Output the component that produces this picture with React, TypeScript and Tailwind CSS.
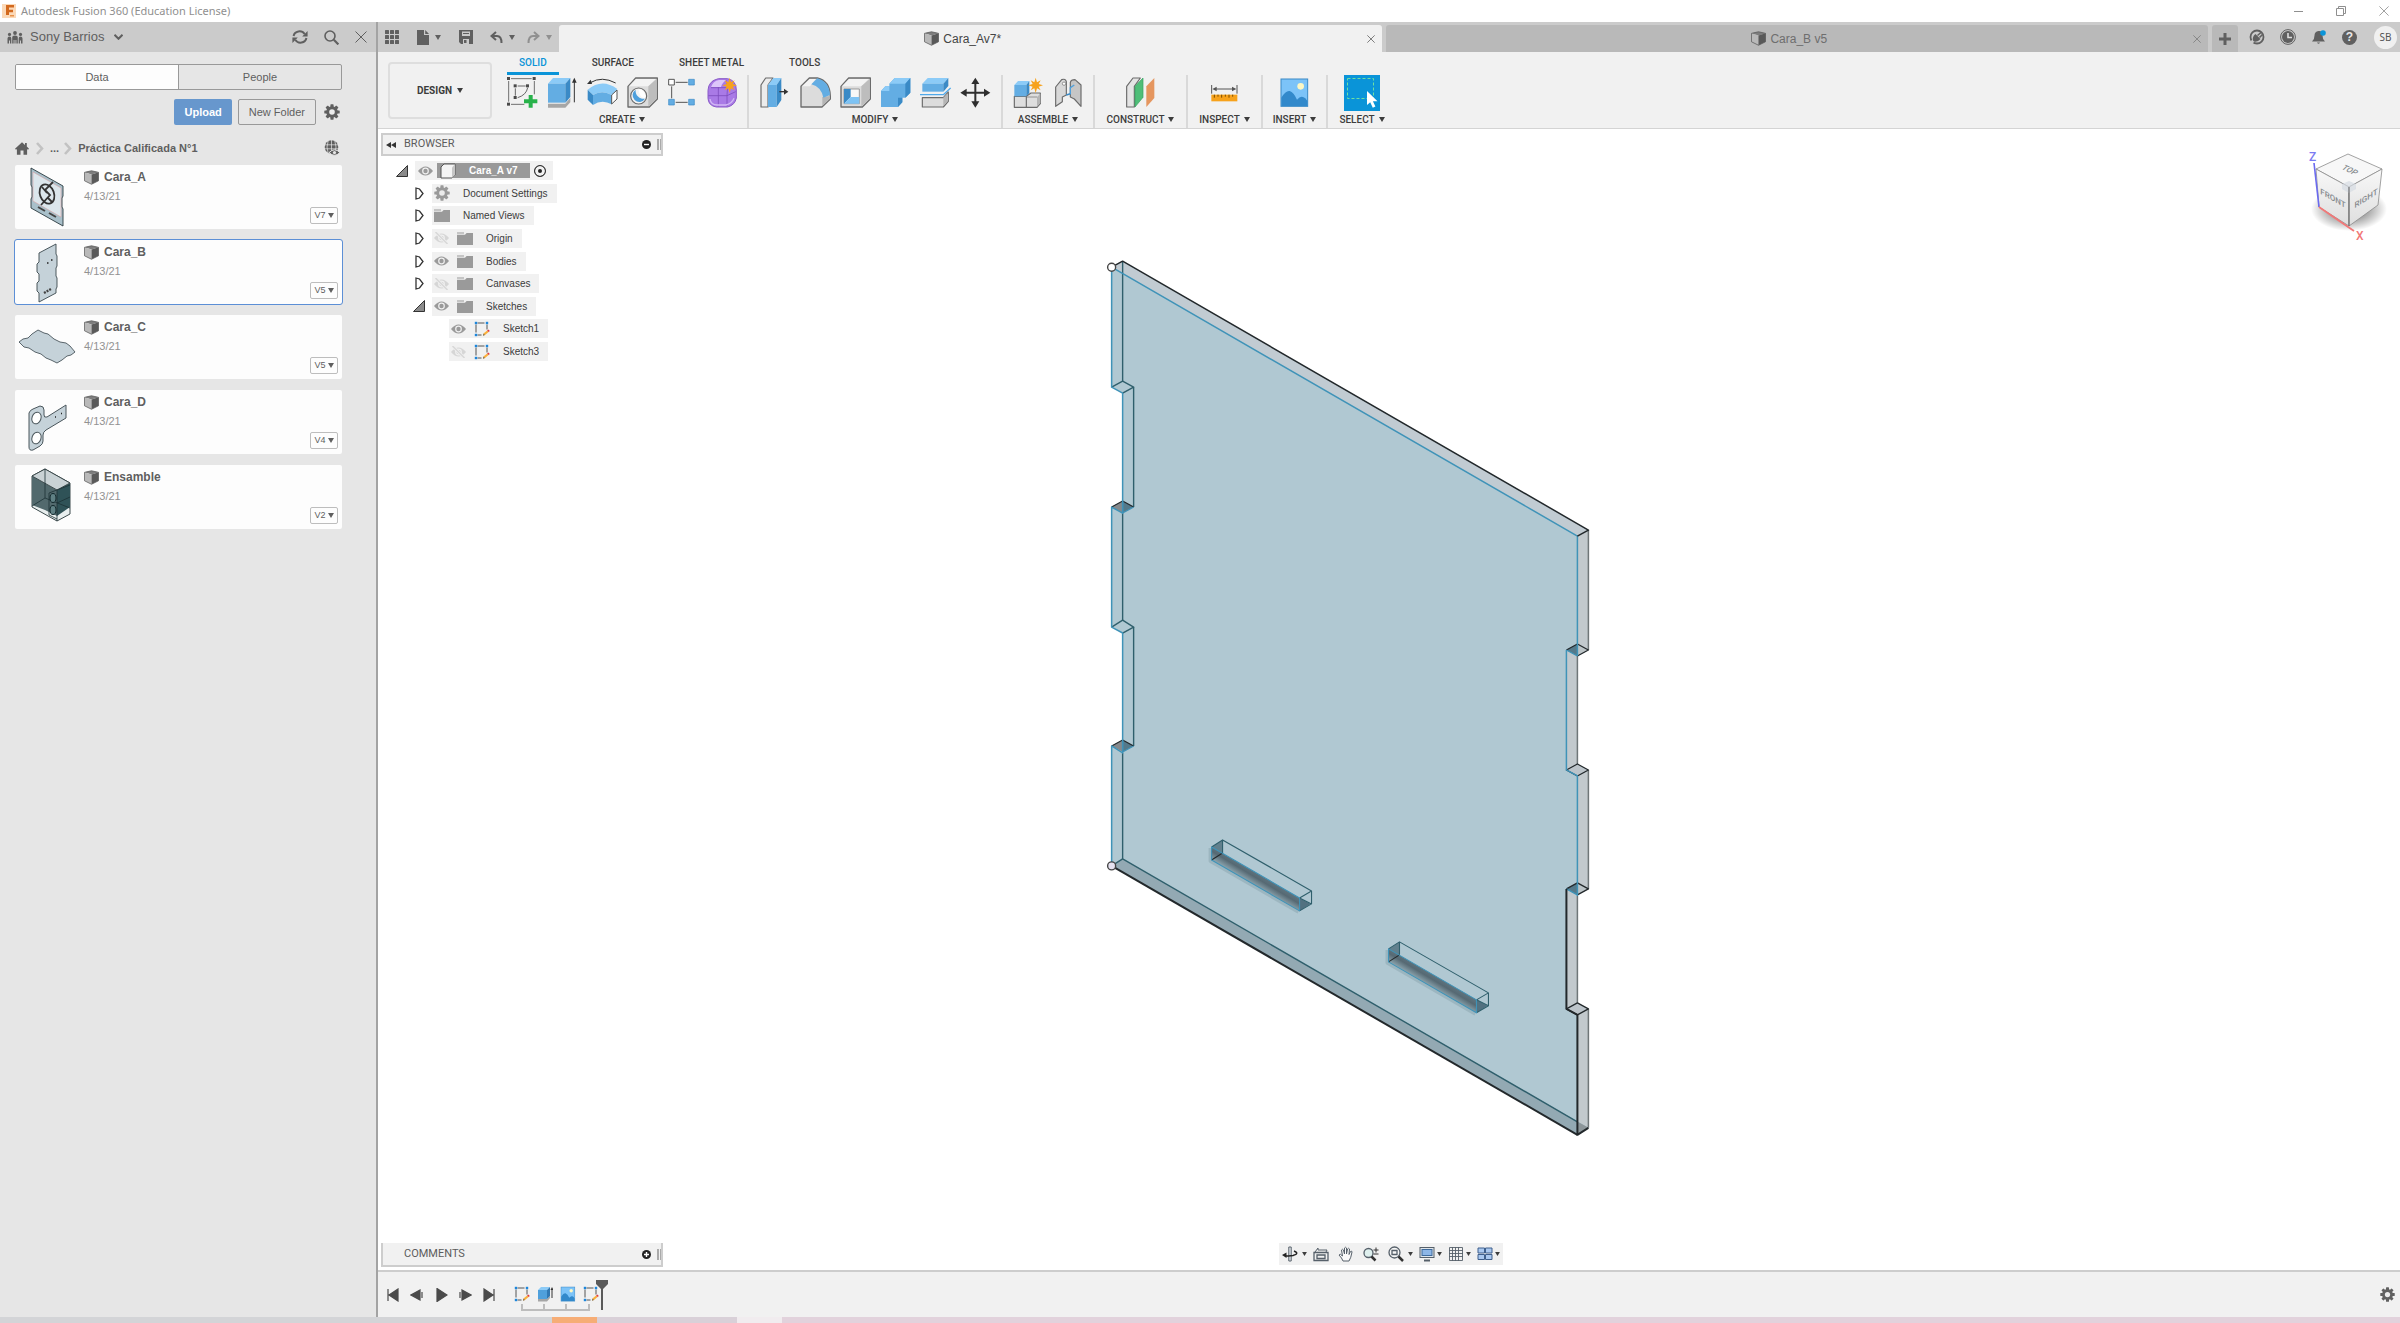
import type { ReactNode } from "react";

type SvgProps = { className?: string };

const OUT = "#6b6b6b";

/* ---------- small glyphs ---------- */

const Caret = ({ className = "w-[6px] h-[5px]" }: SvgProps) => (
  <svg viewBox="0 0 6 5" className={className} aria-hidden="true">
    <path d="M0 0h6L3 5z" fill="currentColor" />
  </svg>
);

const Cross = ({ className = "size-3" }: SvgProps) => (
  <svg viewBox="0 0 12 12" className={className} stroke="currentColor" aria-hidden="true">
    <path d="M0.5 0.5l11 11M11.5 0.5l-11 11" />
  </svg>
);

const Gear = ({ className = "size-4" }: SvgProps) => (
  <svg viewBox="0 0 16 16" className={className} aria-hidden="true">
    <g fill="currentColor">
      {[0, 45, 90, 135].map((a) => (
        <rect key={a} x="6.4" y="0.3" width="3.2" height="15.4" rx="0.6" transform={`rotate(${a} 8 8)`} />
      ))}
      <circle cx="8" cy="8" r="5.8" />
    </g>
    <circle cx="8" cy="8" r="2.8" fill="#ebebeb" />
  </svg>
);

const PartCube = ({ className = "size-4" }: SvgProps) => (
  <svg viewBox="0 0 16 16" className={className} aria-hidden="true">
    <path d="M0.5 2.5L8 0.8l7.5 1.7-7.5 2.3z" fill="#7d7d7d" />
    <path d="M0.5 2.5L8 4.8v10.4L0.5 11.5z" fill="#b9b9b9" />
    <path d="M15.5 2.5L8 4.8v10.4l7.5-3.7z" fill="#595959" />
    <path d="M0.5 2.5L8 0.8l7.5 1.7v9L8 15.2 0.5 11.5z" fill="none" stroke="#595959" strokeWidth="0.8" />
  </svg>
);

const People = () => (
  <svg viewBox="0 0 16 13" className="w-4 h-[13px]" fill="currentColor" aria-hidden="true">
    <circle cx="8" cy="2" r="1.9" />
    <circle cx="2.5" cy="3.4" r="1.6" />
    <circle cx="13.5" cy="3.4" r="1.6" />
    <path d="M5.2 12.5V6.8Q5.2 4.6 8 4.6t2.8 2.2v5.7H9.4V9H8.5v3.5h-1V9h-.9v3.5zM0.5 12.5V7.6Q.5 5.6 2.5 5.6q1.8 0 1.8 2v4.9H3V9.5H2v3zM15.5 12.5V7.6q0-2-2-2-1.8 0-1.8 2v4.9H13V9.5h1v3z" />
  </svg>
);

const Refresh = () => (
  <svg viewBox="0 0 16 14" className="w-4 h-[14px]" fill="none" stroke="currentColor" strokeWidth="2" aria-hidden="true">
    <path d="M1.6 6A6 5.6 0 0 1 12.6 4M14.4 8A6 5.6 0 0 1 3.4 10" />
    <path d="M15.6 1v5.4h-5.4zM0.4 13V7.6h5.4z" fill="currentColor" stroke="none" />
  </svg>
);

const Search = () => (
  <svg viewBox="0 0 15 15" className="size-[15px]" fill="none" stroke="currentColor" aria-hidden="true">
    <circle cx="6" cy="6" r="5" strokeWidth="1.6" />
    <path d="M9.8 9.8l4.6 4.6" strokeWidth="2.2" />
  </svg>
);

const Home = () => (
  <svg viewBox="0 0 14 13" className="w-[14px] h-[13px]" fill="currentColor" aria-hidden="true">
    <path d="M7 0.3l3 2.7V1h1.8v3.6L14 6.8l-1 1-.9-.8v5.7H8.5V8.6h-3v4.1H1.9V7L1 7.8l-1-1z" />
  </svg>
);

const Crumb = () => (
  <svg viewBox="0 0 8 13" className="w-2 h-[13px]" fill="none" stroke="#c2c2c2" strokeWidth="2.6" aria-hidden="true">
    <path d="M1 1l5 5.5-5 5.5" />
  </svg>
);

const GlobeEye = () => (
  <svg viewBox="0 0 16 16" className="size-4" aria-hidden="true">
    <circle cx="7.5" cy="7" r="6.8" fill="#5f5f5f" />
    <path d="M0.5 4.8h14M0.5 8.8h14M7.5 0v14M4.2 0.8Q1.8 7 4.2 13.4M10.8 0.8Q13.2 7 10.8 13.4" fill="none" stroke="#e6e6e6" strokeWidth="0.7" />
    <path d="M5 12.6Q10.5 7 16 12.6 10.5 18 5 12.6z" fill="#5f5f5f" stroke="#e6e6e6" />
    <circle cx="10.5" cy="12.6" r="1.6" fill="#e6e6e6" />
  </svg>
);

const Eye = ({ off = false }: { off?: boolean }) => (
  <svg viewBox="0 0 15 12" className="w-[15px] h-3" aria-hidden="true">
    <path d="M0 6Q7.5 -3 15 6 7.5 15 0 6z" fill={off ? "#d6d6d6" : "#9a9a9a"} />
    <circle cx="7.5" cy="6" r="3.4" fill="#f0f0f0" />
    <circle cx="7.5" cy="6" r="2.2" fill={off ? "#d6d6d6" : "#9a9a9a"} />
    {off && <path d="M1.5 0L13.5 12" stroke="#f0f0f0" strokeWidth="3" />}
    {off && <path d="M1.5 0L13.5 12" stroke="#d6d6d6" strokeWidth="1.4" />}
  </svg>
);

const Folder = () => (
  <svg viewBox="0 0 16 13" className="w-4 h-[13px]" fill="#9a9a9a" aria-hidden="true">
    <path d="M0 0.4h7v1.2H0zM0 2.8h8L9.6 1H16v12H0z" />
  </svg>
);

const SketchSmall = () => (
  <svg viewBox="0 0 16 16" className="size-4" aria-hidden="true">
    <path d="M3.5 2h7M2 3.5v8M13 3.5v5M3.5 14h4" stroke="#555" fill="none" />
    <g fill="#1c86dc">
      <rect x="0.8" y="0.8" width="2.4" height="2.4" />
      <rect x="11.8" y="0.8" width="2.4" height="2.4" />
      <rect x="0.8" y="12.8" width="2.4" height="2.4" />
    </g>
    <path d="M9 14.8l.5-2.4 3.6-3 1.5 1.7-3.6 3z" fill="#fbb03b" />
    <path d="M13.1 9.4l1.2-1 1.5 1.7-1.2 1z" fill="#e2383f" />
    <path d="M9 14.8l.5-2.4 1.4 1.7z" fill="#666" />
  </svg>
);

/* ---------- ribbon icons (93-unit grid drawn at 31px) ---------- */

const Ico = ({ children }: { children: ReactNode }) => (
  <svg viewBox="0 0 93 93" className="size-[31px]" fill="none" strokeLinejoin="round" aria-hidden="true">
    {children}
  </svg>
);

const Star = ({ x, y }: { x: number; y: number }) => (
  <g transform={`translate(${x} ${y})`} fill="#f7a21b">
    <path d="M0-23L4-9 15-15 9-4 22 0 9 4 15 15 4 9 0 23-4 9-15 15-9 4-22 0-9-4-15-15-4-9z" />
  </g>
);

const CreateSketch = () => (
  <Ico>
    <path d="M12 5h62M5 12v62M82 12v40M12 82h40" stroke="#5c5c5c" strokeWidth="2.6" />
    <path d="M32 27h24M25 34v22M62 32Q58 54 32 62" stroke="#5c5c5c" strokeWidth="2.8" />
    <g fill="#4a4a4a">
      <rect width="9" height="9" /><rect x="77" width="9" height="9" /><rect y="77" width="9" height="9" />
      <rect x="20" y="22" width="9" height="9" /><rect x="57" y="22" width="9" height="9" /><rect x="20" y="57" width="9" height="9" />
    </g>
    <path d="M65 54h12v13h14v12H77v13H65V79H51V67h14z" fill="#27b24a" />
  </Ico>
);

const Extrude = () => (
  <Ico>
    <path d="M3 80h52l15-18v14L55 92H3z" fill="#a6a6a6" />
    <path d="M3 20L18 3h52L55 20z" fill="#8ccbf7" />
    <path d="M3 20h52v57H3z" fill="#63ade3" />
    <path d="M55 20L70 3v57L55 77z" fill="#3a8ac6" />
    <path d="M82 76V12" stroke="#333" strokeWidth="3" />
    <path d="M75 17l7-15 7 15z" fill="#333" />
  </Ico>
);

const Revolve = () => (
  <Ico>
    <path d="M10 17Q45-4 86 18" stroke="#333" strokeWidth="3" />
    <path d="M0 21L11 8l4 13z" fill="#333" />
    <path d="M2 38Q45 2 91 36L74 54Q45 38 18 54z" fill="#8ccbf7" />
    <path d="M18 54Q45 38 74 54v28Q45 66 18 84z" fill="#63ade3" />
    <path d="M2 38l16 16v30L2 68z" fill="#3a8ac6" />
    <path d="M74 54l16-15v27L74 81z" fill="#fff" stroke="#555" strokeWidth="3" />
  </Ico>
);

const GreyBox = ({ w = 64 }: { w?: number }) => (
  <>
    <path d={`M3 28L26 3H${w + 27}V66L${w + 3} 90H3z`} fill="#dcdcdc" stroke={OUT} strokeWidth="4" />
    <path d={`M6 28L27 6H${w + 22}L${w} 28z`} fill="#f3f3f3" />
    <path d={`M${w} 28L${w + 25} 6V65L${w} 88z`} fill="#bdbdbd" />
  </>
);

const Hole = () => (
  <Ico>
    <GreyBox />
    <circle cx="35" cy="57" r="24" fill="#f4f4f4" stroke={OUT} strokeWidth="3.5" />
    <path d="M26 38A20 20 0 1 0 54 65 24 24 0 0 1 26 38z" fill="#4fa0dc" />
    <path d="M35 37a20 20 0 0 1 19 27Q36 62 35 37z" fill="#fff" />
  </Ico>
);

const Pattern = () => (
  <Ico>
    <path d="M26 16h36M26 76h36M14 28v36" stroke="#555" strokeWidth="3" />
    <rect x="5" y="7" width="17" height="17" fill="#fff" stroke="#555" strokeWidth="3" />
    <g fill="#63ade3" stroke="#3a8ac6" strokeWidth="2">
      <rect x="65" y="7" width="17" height="17" /><rect x="65" y="67" width="17" height="17" /><rect x="5" y="67" width="17" height="17" />
    </g>
  </Ico>
);

const Form = () => (
  <Ico>
    <path d="M3 40Q4 12 34 5h28q26 6 26 34v24Q84 84 62 90H28Q4 86 3 64z" fill="#a97ae6" stroke="#8a5bc8" strokeWidth="3" />
    <path d="M12 30Q18 12 36 9h22Q46 16 42 30z" fill="#dcc6fa" />
    <path d="M4 56h56l26-12M34 30v58M60 56q4-28-2-46M60 56v32M12 32h48" stroke="#7c4cbc" strokeWidth="2.4" />
    <path d="M9 66q2 18 22 18h26q18-4 24-20" stroke="#d2b8f5" strokeWidth="4" />
    <Star x={68} y={25} />
  </Ico>
);

const PressPull = () => (
  <Ico>
    <path d="M3 24L17 3h22L24 24v66H3z" fill="#ececec" stroke={OUT} strokeWidth="3.5" />
    <path d="M24 24L40 3h24L50 24z" fill="#8ccbf7" />
    <path d="M24 24h26v66H24z" fill="#63ade3" />
    <path d="M50 24L64 3v66L50 90z" fill="#3a8ac6" />
    <path d="M58 44h18" stroke="#333" strokeWidth="4" />
    <path d="M72 35l13 9-13 9z" fill="#333" />
  </Ico>
);

const Fillet = () => (
  <Ico>
    <path d="M3 28L28 3h24Q90 12 91 58v8L66 90H3z" fill="#dcdcdc" stroke={OUT} strokeWidth="4" />
    <path d="M67 60l22-3v9L67 87z" fill="#b5b5b5" />
    <path d="M6 28L29 6h18L30 28z" fill="#f3f3f3" />
    <path d="M34 22L52 4Q88 14 90 54L70 62Q64 30 34 22z" fill="#63ade3" />
  </Ico>
);

const Shell = () => (
  <Ico>
    <GreyBox />
    <rect x="12" y="36" width="46" height="44" fill="#f8f8f8" stroke="#777" strokeWidth="2" />
    <path d="M12 36h20v24L12 80z" fill="#3a8ac6" />
    <path d="M12 80l20-20h26v20z" fill="#7ec3f4" />
  </Ico>
);

const Combine = () => (
  <Ico>
    <path d="M3 42l13-14h12V20L44 3h47v44L76 62h-9v14L54 90H3z" fill="#63ade3" />
    <path d="M3 42l13-14h12v14zM28 20L44 3h47L76 20z" fill="#8ccbf7" />
    <path d="M76 20L91 3v44L76 62zM54 62h13v14L54 90z" fill="#3a8ac6" />
  </Ico>
);

const Split = () => (
  <Ico>
    <path d="M7 20L23 3h62L70 20z" fill="#8ccbf7" />
    <path d="M7 20h63v24H7z" fill="#63ade3" />
    <path d="M70 20L85 3v24L70 44z" fill="#3a8ac6" />
    <path d="M0 53h70l22-20" stroke="#4fa9ea" strokeWidth="4" />
    <path d="M7 62h63l15-17v28L70 90H7z" fill="#dcdcdc" stroke={OUT} strokeWidth="3.5" />
    <path d="M70 62l13-14v24L70 87z" fill="#b5b5b5" />
  </Ico>
);

const Move = () => (
  <Ico>
    <path d="M46 10v74M9 47h74" stroke="#2e2e2e" strokeWidth="6" />
    <path d="M46 2l12 19H34zM46 92l12-19H34zM1 47l19-12v24zM91 47L72 35v24z" fill="#2e2e2e" />
  </Ico>
);

const NewComponent = () => (
  <Ico>
    <path d="M4 58h36v33H4zM40 58l14-10h28v32L72 91H40z" fill="#dedede" stroke={OUT} strokeWidth="3.5" />
    <path d="M72 60l10-10v28L72 89z" fill="#b5b5b5" />
    <path d="M40 60h32" stroke={OUT} strokeWidth="2" />
    <path d="M4 24L15 12h34L40 24z" fill="#8ccbf7" />
    <path d="M4 24h36v34H4z" fill="#63ade3" />
    <path d="M40 24l9-12v36l-9 10z" fill="#3a8ac6" />
    <Star x={68} y={25} />
  </Ico>
);

const Joint = () => (
  <Ico>
    <path d="M8 88V30L26 8q12-4 14 6v40L28 60V74z" fill="#d8d8d8" stroke={OUT} strokeWidth="3.5" />
    <circle cx="33" cy="20" r="5" fill="#fff" stroke={OUT} strokeWidth="2" />
    <path d="M84 88V24L66 8q-12 0-14 8v44l12 6z" fill="#c6c6c6" stroke={OUT} strokeWidth="3.5" />
    <path d="M40 54l12-4" stroke="#3a8ac6" strokeWidth="5" />
    <path d="M52 52V32l12-8" stroke="#4fa0dc" strokeWidth="4" />
  </Ico>
);

const Plane = () => (
  <Ico>
    <path d="M5 28L24 3h22L28 28v62H5z" fill="#e4e4e4" stroke={OUT} strokeWidth="3.5" />
    <path d="M30 28L54 3v58L30 90z" fill="#4fbe78" stroke="#35a05e" strokeWidth="2" />
    <path d="M64 28L88 3v60L64 90z" fill="#e5965f" />
  </Ico>
);

const Measure = () => (
  <Ico>
    <path d="M8 24v26M84 24v26M16 36h60" stroke="#555" strokeWidth="3" />
    <path d="M10 36l13-7v14zM82 36l-13-7v14z" fill="#555" />
    <rect x="7" y="53" width="78" height="20" fill="#f7a21b" />
    <path d="M16 53v9M27 53v6M38 53v9M49 53v6M60 53v9M71 53v6" stroke="#7a4c00" strokeWidth="3" />
  </Ico>
);

const Picture = ({ className = "size-[31px]" }: SvgProps) => (
  <svg viewBox="0 0 93 93" className={className} aria-hidden="true">
    <rect x="6" y="6" width="80" height="82" fill="#7cc3f8" stroke="#3a8ac6" strokeWidth="3" />
    <circle cx="65" cy="28" r="10" fill="#fdf7c3" />
    <path d="M7 62Q20 40 32 42q12 4 22 26 10-12 18-8 8 2 13 12v15H7z" fill="#3289cb" />
  </svg>
);

const SelectTool = () => (
  <svg viewBox="0 0 36 36" className="size-9 bg-[#0a94d8]" fill="none" aria-hidden="true">
    <rect x="3.5" y="3.5" width="26" height="20" stroke="#6fe0a0" strokeDasharray="3 2" />
    <path d="M23 16v14l3.200-2.800 2.600 5.600 2.600-1.200-2.500-5.400H33.500z" fill="#fff" />
  </svg>
);

type Tool = { name: string; icon: ReactNode };
type Group = { label: string; width: string; tools: Tool[] };

const GROUPS: Group[] = [
  {
    label: "CREATE", width: "w-[252px]",
    tools: [
      { name: "Create Sketch", icon: <CreateSketch /> }, { name: "Extrude", icon: <Extrude /> },
      { name: "Revolve", icon: <Revolve /> }, { name: "Hole", icon: <Hole /> },
      { name: "Pattern", icon: <Pattern /> }, { name: "Create Form", icon: <Form /> },
    ],
  },
  {
    label: "MODIFY", width: "w-[254px]",
    tools: [
      { name: "Press Pull", icon: <PressPull /> }, { name: "Fillet", icon: <Fillet /> },
      { name: "Shell", icon: <Shell /> }, { name: "Combine", icon: <Combine /> },
      { name: "Split Body", icon: <Split /> }, { name: "Move", icon: <Move /> },
    ],
  },
  { label: "ASSEMBLE", width: "w-[92px]", tools: [{ name: "New Component", icon: <NewComponent /> }, { name: "Joint", icon: <Joint /> }] },
  { label: "CONSTRUCT", width: "w-[93px]", tools: [{ name: "Offset Plane", icon: <Plane /> }] },
  { label: "INSPECT", width: "w-[75px]", tools: [{ name: "Measure", icon: <Measure /> }] },
  { label: "INSERT", width: "w-[65px]", tools: [{ name: "Insert Canvas", icon: <Picture /> }] },
  { label: "SELECT", width: "w-[68px]", tools: [{ name: "Select", icon: <SelectTool /> }] },
];

/* ---------- data panel ---------- */

const PLATE = "#c5d2d9";

const Thumbs: Record<string, ReactNode> = {
  Cara_A: (
    <>
      <path d="M16 3l32 18v10l-1 2v9l1 2v17L16 43V34l1-2V22l-1-2z" fill="#a9c0ca" stroke="#2b3a40" strokeWidth="0.9" />
      <path d="M18 7l28 16v29L18 36z" fill="#dbe6ec" stroke="#d99" strokeWidth="0.5" />
      <g fill="none" stroke="#333" strokeWidth="1.8">
        <ellipse cx="32" cy="29" rx="7" ry="10" transform="rotate(-20 32 29)" />
        <path d="M38 17l-8 8 5 5-9 10M27 22l5 6M33 33l4 4" />
      </g>
      <path d="M23 42l7 4M34 48l7 4" stroke="#444" strokeWidth="2" />
    </>
  ),
  Cara_B: (
    <>
      <path d="M24 13L41 4V14L42 16V26L41 28V36L42 38V47L41 49V53L24 62V53L22 51V43L24 41V34L22 32V24L24 22Z" fill={PLATE} stroke="#3a474d" strokeWidth="0.9" />
      <path d="M32 23h1.500M36 20h1.500" stroke="#222" strokeWidth="1.6" />
      <path d="M29 53l7-4" stroke="#444" strokeWidth="2.400" strokeDasharray="2 1" />
    </>
  ),
  Cara_C: (
    <path
      d="M4 27L8 24 13 23 17 19 23 15 29 18 33 19 39 24 45 27 51 28 55 31 60 37 56 40 52 41 47 45 42 48 36 45 31 43 26 39 20 37 14 33 9 32Z"
      fill={PLATE} stroke="#4a565c" strokeWidth="0.9"
    />
  ),
  Cara_D: (
    <>
      <path d="M14 23q1-3 4-4l7-3q4 0 4 4v5q0 3 3 2l19-12v13L31 40q-3 2-3 5v6q0 3-3 5l-7 4q-4 1-4-3z" fill={PLATE} stroke="#4a565c" />
      <ellipse cx="21.500" cy="28" rx="4.500" ry="6" fill="#fff" stroke="#4a565c" transform="rotate(20 21.500 28)" />
      <ellipse cx="21.500" cy="48" rx="4.500" ry="6" fill="#fff" stroke="#4a565c" transform="rotate(20 21.500 48)" />
      <path d="M40 27h1M46 23.500h1" stroke="#222" strokeWidth="1.600" />
    </>
  ),
  Ensamble: (
    <>
      <path d="M17 11L30 4 55 18V49L42 56 17 42Z" fill="#e8eeee" stroke="#3c4a4c" />
      <path d="M17 11L42 25V51L30 45 17 40Z" fill="#52696d" />
      <path d="M42 25L55 18V42L42 51Z" fill="#2f5257" />
      <path d="M17 11L30 4 55 18 42 25Z" fill="#c9d2d5" stroke="#3c4a4c" />
      <path d="M17 41L30 33 55 43M30 4V33M42 25V56M34 28V50L42 54M34 28L55 20M42 38L55 32" fill="none" stroke="#1c3135" strokeWidth="0.800" />
      <ellipse cx="38" cy="33" rx="3" ry="4.500" fill="#5f8084" stroke="#10272b" />
      <ellipse cx="38" cy="45" rx="3" ry="4.500" fill="#5f8084" stroke="#10272b" />
    </>
  ),
};

const FILES = [
  { name: "Cara_A", version: "V7" },
  { name: "Cara_B", version: "V5", selected: true },
  { name: "Cara_C", version: "V5" },
  { name: "Cara_D", version: "V4" },
  { name: "Ensamble", version: "V2" },
];

function DataPanel() {
  return (
    <aside className="flex w-[378px] shrink-0 flex-col border-r-2 border-[#a3a3a3] bg-[#e6e6e6] text-[11px] text-[#5f5f5f]">
      <header className="flex h-[30px] items-center bg-[#cbcbcb] pl-[7px] pr-[9px]">
        <People />
        <button className="ml-[7px] flex items-center gap-[10px] text-[13px]">
          Sony Barrios
          <svg viewBox="0 0 9 6" className="h-[6px] w-[9px]" fill="none" stroke="currentColor" strokeWidth="2" aria-hidden="true">
            <path d="M0.500 0.800l4 4 4-4" />
          </svg>
        </button>
        <div className="ml-auto flex items-center gap-4">
          <button aria-label="Refresh"><Refresh /></button>
          <button aria-label="Search"><Search /></button>
          <button aria-label="Close panel"><Cross /></button>
        </div>
      </header>
      <div className="flex flex-col pl-[15px] pr-[34px] pt-3">
        <div className="flex h-[26px] overflow-hidden rounded-[2px] border border-[#999]" role="tablist">
          <button role="tab" aria-selected="true" className="flex-1 border-r border-[#999] bg-[#fdfdfd]">Data</button>
          <button role="tab" aria-selected="false" className="flex-1">People</button>
        </div>
        <div className="mt-[9px] flex h-[26px] items-center justify-end">
          <button className="h-full rounded-[2px] bg-[#6797cd] px-[10px] font-bold text-white">Upload</button>
          <button className="ml-[6px] h-full rounded-[2px] border border-[#999] px-[10px]">New Folder</button>
          <button aria-label="Settings" className="ml-2 mr-[2px]"><Gear /></button>
        </div>
        <nav aria-label="Breadcrumb" className="mt-[15px] flex h-4 items-center font-bold">
          <a href="#home" aria-label="Home"><Home /></a>
          <span className="ml-[7px]"><Crumb /></span>
          <a href="#parents" className="ml-[6px]">...</a>
          <span className="ml-[5px]"><Crumb /></span>
          <a href="#folder" className="ml-[6px]">Práctica Calificada N°1</a>
          <button aria-label="Open on the web" className="ml-auto mr-[2px]"><GlobeEye /></button>
        </nav>
        <ul className="mt-[9px] flex flex-col gap-[11px]">
          {FILES.map((f) => (
            <li
              key={f.name}
              className={
                f.selected
                  ? "flex h-16 rounded-[2px] bg-[#fdfdfd] outline outline-1 outline-[#5c8fd6]"
                  : "flex h-16 rounded-[2px] bg-[#fdfdfd]"
              }
            >
              <svg viewBox="0 0 64 64" className="size-16 shrink-0" aria-hidden="true">{Thumbs[f.name]}</svg>
              <div className="flex flex-1 flex-col pl-[5px] pt-1">
                <a href={`#${f.name}`} className="flex h-4 items-center gap-[5px] text-[12px] font-bold">
                  <PartCube className="size-[15px]" />
                  {f.name}
                </a>
                <span className="mt-1 leading-[14px] text-[#929292]">4/13/21</span>
              </div>
              <button className="mb-[5px] mr-1 flex h-[17px] w-7 items-center justify-center gap-[2px] self-end rounded-[2px] border border-[#bdbdbd] text-[9px]">
                {f.version}
                <Caret />
              </button>
            </li>
          ))}
        </ul>
      </div>
    </aside>
  );
}

/* ---------- top bars ---------- */

function TitleBar() {
  return (
    <header className="flex h-[22px] shrink-0 items-center bg-white text-[11px] text-[#8f8f8f]">
      <svg viewBox="0 0 14 14" className="ml-[2px] size-[14px]" aria-hidden="true">
        <rect width="14" height="14" fill="#fbd9b8" />
        <path d="M4 1h8v2.600H7v2.200h4v2.400H7V11H4z" fill="#d2691e" />
        <path d="M8 11h4v1.500H8z" fill="#e8924a" />
      </svg>
      <h1 className="ml-[5px] font-['Noto_Sans','Open_Sans',sans-serif]">Autodesk Fusion 360 (Education License)</h1>
      <div className="ml-auto flex items-center gap-[33px] pr-[11px]">
        <button aria-label="Minimize"><span className="block h-px w-[9px] bg-[#8f8f8f]" /></button>
        <button aria-label="Restore">
          <svg viewBox="0 0 10 10" className="size-[10px]" fill="none" stroke="currentColor" aria-hidden="true">
            <path d="M0.500 2.500h7v7h-7zM2.500 2.500v-2h7v7h-2" />
          </svg>
        </button>
        <button aria-label="Close"><Cross className="size-[10px]" /></button>
      </div>
    </header>
  );
}

function DocumentBar() {
  return (
    <div className="flex h-[30px] items-end bg-[#cbcbcb] text-[#606060]">
      <div className="flex h-full w-[181px] shrink-0 items-center pl-[7px]">
        <button aria-label="Show data panel">
          <svg viewBox="0 0 14 14" className="size-[14px]" fill="currentColor" aria-hidden="true">
            {[0, 5, 10].map((x) => [0, 5, 10].map((y) => <rect key={`${x}-${y}`} x={x} y={y} width="4" height="4" rx="0.500" />))}
          </svg>
        </button>
        <button aria-label="File" className="ml-[18px] flex items-center gap-[6px]">
          <svg viewBox="0 0 12 15" className="h-[15px] w-3" fill="currentColor" aria-hidden="true"><path d="M0 0h7v5h5v10H0zM8.200 0L12 3.900H8.200z" /></svg>
          <Caret />
        </button>
        <button aria-label="Save" className="ml-[18px]">
          <svg viewBox="0 0 14 14" className="size-[14px]" aria-hidden="true">
            <path d="M0 0h14v14H2l-2-2z" fill="currentColor" />
            <path d="M3 1.500h8v4.500H3zM4 9h6v5H4z" fill="#cbcbcb" />
            <path d="M4 3h6v1H4zM5 10h2.500v3H5z" fill="currentColor" />
          </svg>
        </button>
        <button aria-label="Undo" className="ml-[17px] flex items-center gap-[6px]">
          <svg viewBox="0 0 13 13" className="size-[13px]" fill="none" stroke="currentColor" strokeWidth="2" aria-hidden="true">
            <path d="M6 1L1.500 5 6 9M1.500 5H7q4.500 0 4.500 7" />
          </svg>
          <Caret />
        </button>
        <button aria-label="Redo" className="ml-3 flex items-center gap-[6px] text-[#909090]">
          <svg viewBox="0 0 13 13" className="size-[13px]" fill="none" stroke="currentColor" strokeWidth="2" aria-hidden="true">
            <path d="M7 1l4.500 4L7 9M11.500 5H6q-4.500 0-4.500 7" />
          </svg>
          <Caret />
        </button>
      </div>
      <div className="flex h-[27px] flex-1 gap-1 text-[12px]">
        <div className="flex flex-1 items-center rounded-t-[3px] bg-[#f1f1f1] pr-[7px] text-[#444]">
          <button className="flex h-full flex-1 items-center justify-center gap-1"><PartCube className="size-[15px]" />Cara_Av7*</button>
          <button aria-label="Close Cara_A"><Cross className="size-2" /></button>
        </div>
        <div className="flex flex-1 items-center rounded-t-[3px] bg-[#b9b9b9] pr-[7px] text-[#6e6e6e]">
          <button className="flex h-full flex-1 items-center justify-center gap-1"><PartCube className="size-[15px]" />Cara_B v5</button>
          <button aria-label="Close Cara_B"><Cross className="size-2" /></button>
        </div>
      </div>
      <button aria-label="New design" className="ml-1 flex h-[27px] w-[26px] items-center justify-center rounded-t-[3px] bg-[#b9b9b9]">
        <svg viewBox="0 0 12 12" className="size-3" stroke="currentColor" strokeWidth="3" aria-hidden="true"><path d="M6 0v12M0 6h12" /></svg>
      </button>
      <div className="ml-[11px] flex h-full items-center gap-[15px] pr-[3px]">
        <button aria-label="Extensions">
          <svg viewBox="0 0 16 16" className="size-4" fill="none" aria-hidden="true">
            <circle cx="8" cy="8" r="6.500" stroke="currentColor" strokeWidth="1.800" />
            <path d="M1 15l3.500-3.500" stroke="#cbcbcb" strokeWidth="3" />
            <path d="M4 11.500q-1-4 2.500-6.500l5 5q-3 3.500-6.500 2.500z" fill="currentColor" />
            <path d="M8.500 6.500L12 3.500M10.500 8.500L13.500 5.500" stroke="currentColor" strokeWidth="1.600" />
          </svg>
        </button>
        <button aria-label="Job status">
          <svg viewBox="0 0 16 16" className="size-4" fill="none" aria-hidden="true">
            <circle cx="8" cy="8" r="7.400" stroke="currentColor" />
            <circle cx="8" cy="8" r="6" fill="currentColor" />
            <path d="M8 4v4.500h4" stroke="#ddd" strokeWidth="1.600" />
          </svg>
        </button>
        <button aria-label="Notifications">
          <svg viewBox="0 0 16 16" className="size-4" aria-hidden="true">
            <path d="M1 12.500q2.500-2 2.500-6Q3.500 2.500 7.500 2t4 4.500q0 4 2.500 6zM6 13.500h3q-1.500 2.500-3 0z" fill="currentColor" />
            <circle cx="12" cy="4" r="2.800" fill="#0a94d8" />
          </svg>
        </button>
        <button aria-label="Help" className="flex size-[15px] items-center justify-center rounded-full bg-[#606060] text-[12px] font-bold text-[#e8e8e8]">?</button>
        <button className="ml-[2px] flex size-[23px] items-center justify-center rounded-full bg-[#f0f0f0] font-['Noto_Sans',sans-serif] text-[10px] text-[#555]">SB</button>
      </div>
    </div>
  );
}

function Ribbon() {
  return (
    <div className="flex h-[77px] border-b border-[#d4d4d4] bg-[#f1f1f1] font-['Roboto','Liberation_Sans',sans-serif] text-[10px] font-medium text-[#3c3c3c]">
      <div className="w-[119px] shrink-0 pl-[10px] pt-[10px]">
        <button className="flex h-[57px] w-[104px] items-center justify-center gap-[5px] rounded border-2 border-[#dedede] font-bold">
          DESIGN <Caret />
        </button>
      </div>
      <div className="flex flex-col">
        <div role="tablist" className="flex h-[23px] gap-[21px] pl-[10px]">
          <button role="tab" aria-selected="true" className="border-b-[3px] border-[#0a94d8] px-3 pt-[1px] text-[#0a94d8]">SOLID</button>
          <button role="tab" aria-selected="false" className="px-3 pb-[2px]">SURFACE</button>
          <button role="tab" aria-selected="false" className="px-3 pb-[2px]">SHEET METAL</button>
          <button role="tab" aria-selected="false" className="px-3 pb-[2px]">TOOLS</button>
        </div>
        <div className="flex h-[53px]">
          {GROUPS.map((g) => (
            <div key={g.label} className={`${g.width} flex flex-col items-center border-r-2 border-[#d9d9d9] last:border-r-0`}>
              <div className="flex h-[35px] items-center justify-center gap-[9px]">
                {g.tools.map((t) => (
                  <button key={t.name} aria-label={t.name}>{t.icon}</button>
                ))}
              </div>
              <button className="flex h-[18px] items-center gap-1">{g.label} <Caret /></button>
            </div>
          ))}
        </div>
      </div>
    </div>
  );
}

/* ---------- canvas ---------- */

const shift = (pts: number[][], dx: number, dy: number) => pts.map(([x, y]) => `${x + dx},${y + dy}`).join(" ");

const FACE = [
  [1111, 267], [1577, 536], [1577, 656], [1566, 650], [1566, 770], [1577, 776], [1577, 896], [1566, 889],
  [1566, 1009], [1577, 1015], [1577, 1135], [1111, 866], [1111, 746], [1122, 753], [1122, 633], [1111, 627],
  [1111, 507], [1122, 513], [1122, 393], [1111, 387],
];

const BLUE = "#3f93b8";
const TEAL = "#2f5f6c";
const DARK = "#22282b";

const Slot = ({ x, y }: { x: number; y: number }) => (
  <g transform={`translate(${x} ${y})`} fill="none" strokeWidth="1.100" strokeLinejoin="round">
    <path d="M-1 1v13l88 51" stroke="#7f9aa5" strokeWidth="4" opacity="0.400" />
    <path d="M0 0l11-7v13L0 13z" fill="#61808d" />
    <path d="M0 0l88 51v13L0 13z" fill="url(#slot)" />
    <path d="M88 64V51l11 6z" fill="#527180" />
    <path d="M0 0l11-7 89 51v13l-12 7M11-7V6M88 51l12-7M88 64l12-7-12-6" stroke={TEAL} />
    <path d="M0 13l11-7" stroke={DARK} />
    <path d="M0 0l88 51v13L0 13z" stroke={BLUE} />
  </g>
);

function Model() {
  return (
    <svg viewBox="377 129 2023 1141" className="absolute inset-0 size-full" fill="none" strokeLinejoin="round" role="img" aria-label="Cara_A body">
      <defs>
        <linearGradient id="slot" gradientUnits="userSpaceOnUse" x1="0" y1="13" x2="6" y2="3">
          <stop offset="0" stopColor="#8ea7b1" />
          <stop offset="0.650" stopColor="#566973" />
          <stop offset="1" stopColor="#5d737e" />
        </linearGradient>
      </defs>
      <polygon points={shift(FACE, 11, -6)} fill="#c2c9cd" />
      <path d="M1111 267l11-6 466 269-11 6z" fill="#c1cbd2" />
      <polygon points={shift(FACE, 0, 0)} fill="#b0c8d2" />
      <path d="M1111 866l11-7 466 269-11 7z" fill="#93a9b3" />
      <path d="M1577 1122v13l11-7z" fill="#8c9599" />

      {/* back edges seen through the plate */}
      <g stroke={TEAL} strokeWidth="1.400">
        <path d="M1122 261v120M1133 387v120M1122 513v107M1133 627v119M1122 753v106M1122 859l455 263" />
        <path d="M1111 387l11-6 11 6-11 6M1111 627l11-7 11 7-11 6M1111 866l11-7" />
      </g>
      <g stroke="#6f7678" strokeWidth="1.500">
        <path d="M1588 530v120M1577 656v108M1588 770v119M1577 896v107M1588 1009v119" />
      </g>
      {[507, 746].map((y) => (
        <g key={y}>
          <path d={`M1111 ${y}l11-6v12z`} fill="#85898c" />
          <path d={`M1122 ${y - 6}l11 6-11 6z`} fill="#54798a" />
          <path d={`M1111 ${y}l11-6 11 6`} stroke={DARK} strokeWidth="1.200" />
          <path d={`M1122 ${y - 6}v12l11-6`} stroke={BLUE} strokeWidth="1.200" />
        </g>
      ))}
      {[650, 889].map((y) => (
        <g key={y} strokeWidth="1.300">
          <path d={`M1566 ${y}l11-6v12z`} fill="#54798a" />
          <path d={`M1577 ${y - 6}l11 6-11 6z`} fill="#bcc4c7" />
          <path d={`M1566 ${y}l11-6 11 6-11 6`} stroke={DARK} />
          <path d={`M1566 ${y}l11 6`} stroke={BLUE} />
        </g>
      ))}
      {[770, 1009].map((y) => (
        <path key={y} d={`M1566 ${y}l11-6 11 6-11 6z`} fill="#bcc4ca" stroke={DARK} strokeWidth="1.300" />
      ))}

      {/* highlighted profile */}
      <path
        d="M1111 866V746l11 7V633l-11-6V507l11 6V393l-11-6V267l466 269v120M1566 650v120l11 6v120"
        stroke={BLUE}
        strokeWidth="1.500"
      />
      <path d="M1111 267l11-6 466 269-11 6" stroke={DARK} strokeWidth="1.500" />
      <path d="M1566 889v120l11 6v120l11-7" stroke={DARK} strokeWidth="2" />
      <path d="M1111 866l466 269" stroke={DARK} strokeWidth="2" />

      <Slot x={1211} y={847} />
      <Slot x={1388} y={949} />

      <circle cx="1111" cy="267" r="4" fill="#fff" stroke="#444" strokeWidth="1.400" />
      <circle cx="1111" cy="866" r="4" fill="#e6e2f0" stroke="#444" strokeWidth="1.400" />
    </svg>
  );
}

const ViewCube = () => (
  <svg viewBox="0 0 90 100" className="absolute right-[7px] top-[18px] h-[100px] w-[90px] font-['Roboto',sans-serif]" role="img" aria-label="View cube: top, front, right">
    <defs>
      <radialGradient id="shade"><stop offset="0.500" stopColor="#000" stopOpacity="0.350" /><stop offset="1" stopColor="#000" stopOpacity="0" /></radialGradient>
      <linearGradient id="face" x2="0" y2="1"><stop offset="0" stopColor="#f8f8f8" /><stop offset="1" stopColor="#dedede" /></linearGradient>
    </defs>
    <ellipse cx="46" cy="62" rx="38" ry="22" fill="url(#shade)" />
    <g stroke="#8c8c8c" strokeWidth="0.800">
      <path d="M13 22l32-15 34 15-33 18z" fill="#f7f7f7" />
      <path d="M13 22l33 18v39L16 60z" fill="url(#face)" />
      <path d="M79 22L46 40v39l29-21z" fill="url(#face)" />
    </g>
    <path d="M46 34l7 3v5l-7 4-7-4v-5z" fill="#d5dce3" opacity="0.700" />
    <path d="M46 40v39" stroke="#666" />
    <path d="M11 16l5 44" stroke="#6a6af0" strokeWidth="1.600" />
    <path d="M16 60l35 24" stroke="#f27878" strokeWidth="1.800" />
    <g fill="#85898d" fontSize="8" fontWeight="500" textAnchor="middle">
      <text transform="translate(30 54) skewY(30)">FRONT</text>
      <text transform="translate(63 54) skewY(-32)">RIGHT</text>
      <text transform="translate(45 25) rotate(26) skewX(-20)">TOP</text>
    </g>
    <text x="6" y="14" fontSize="12" fill="#7b7bf2" fontWeight="500">Z</text>
    <text x="53" y="93" fontSize="12" fill="#f27878" fontWeight="500">X</text>
  </svg>
);

/* ---------- browser tree ---------- */

const Expand = () => (
  <svg viewBox="0 0 9 13" className="h-[13px] w-[9px]" fill="#fff" stroke="#333" strokeWidth="1.300" aria-hidden="true">
    <path d="M1 1l3.500 1L8 6.500 4.500 11 1 12z" />
  </svg>
);

const Collapse = () => (
  <svg viewBox="0 0 12 12" className="size-3" aria-hidden="true">
    <path d="M0.500 11.500h11V0.500z" fill="#8b8b8b" stroke="#333" />
  </svg>
);

const NODES = [
  { name: "Document Settings", eye: "none", icon: "gear", open: false, level: 1 },
  { name: "Named Views", eye: "none", icon: "folder", open: false, level: 1 },
  { name: "Origin", eye: "off", icon: "folder", open: false, level: 1 },
  { name: "Bodies", eye: "on", icon: "folder", open: false, level: 1 },
  { name: "Canvases", eye: "off", icon: "folder", open: false, level: 1 },
  { name: "Sketches", eye: "on", icon: "folder", open: true, level: 1 },
  { name: "Sketch1", eye: "on", icon: "sketch", open: false, level: 2 },
  { name: "Sketch3", eye: "off", icon: "sketch", open: false, level: 2 },
];

function PanelBar({ title, plus = false }: { title: string; plus?: boolean }) {
  return (
    <div
      className={
        plus
          ? "flex h-6 w-[282px] items-center border-2 border-t-0 border-[#cdcdcd] bg-[#f1f1f1] pl-[3px] text-[#5c5c5c]"
          : "flex h-[23px] w-[282px] items-center border-2 border-[#cdcdcd] bg-[#f1f1f1] pl-[3px] text-[#5c5c5c]"
      }
    >
      <span className="w-[18px]">
        {!plus && (
          <svg viewBox="0 0 10 6" className="h-[6px] w-[10px]" fill="#333" aria-hidden="true"><path d="M5 0v6L0 3zM10 0v6L5 3z" /></svg>
        )}
      </span>
      <span className="font-['Roboto','Liberation_Sans',sans-serif] text-[11px]">{title}</span>
      <button aria-label={plus ? "Expand comments" : "Collapse browser"} className="ml-auto mr-[6px]">
        <svg viewBox="0 0 9 9" className="size-[9px]" aria-hidden="true">
          <circle cx="4.500" cy="4.500" r="4.500" fill="#222" />
          <path d={plus ? "M2 4.500h5M4.500 2v5" : "M2 4.500h5"} stroke="#fff" strokeWidth="1.400" />
        </svg>
      </button>
      <span className="h-[11px] w-[4px] border-l-2 border-r border-[#aaa]" />
    </div>
  );
}

function Browser() {
  return (
    <section aria-label="Browser" className="relative self-start text-[10px] text-[#3c3c3c]">
      <PanelBar title="BROWSER" />
      <ul className="mt-[5px] flex h-[200px] flex-col justify-between">
        <li className="flex h-[19px] items-center pl-[15px]">
          <button aria-label="Collapse Cara_A"><Collapse /></button>
          <div className="ml-[7px] flex h-full items-center bg-[#f1f1f1] pl-[3px] pr-[7px]">
            <button aria-label="Toggle visibility of Cara_A"><Eye /></button>
            <label htmlFor="active-root" className="ml-1 flex h-[15px] items-center bg-[#999] pl-[3px] pr-3 font-bold text-white">
              <svg viewBox="0 0 16 16" className="mr-[13px] size-4" aria-hidden="true">
                <path d="M1 4l3-3h11v11l-3 3H1z" fill="#f4f4f4" stroke="#555" />
                <path d="M12 4.500L15 1v11l-3 3z" fill="#c6c6c6" />
              </svg>
              Cara_A v7
            </label>
            <input
              id="active-root"
              type="radio"
              defaultChecked
              className="ml-1 size-3 appearance-none rounded-full border border-[#333] bg-[#222] shadow-[inset_0_0_0_3px_#f1f1f1]"
            />
          </div>
        </li>
        {NODES.map((n) => (
          <li key={n.name} className={n.level === 1 ? "flex h-[19px] items-center pl-8" : "flex h-[19px] items-center pl-[49px]"}>
            <span className="w-[19px]">
              {n.level === 1 && (
                <button className={n.open ? "block" : "block pl-[2px]"} aria-label={`Toggle ${n.name}`}>
                  {n.open ? <Collapse /> : <Expand />}
                </button>
              )}
            </span>
            <div className="flex h-full items-center bg-[#f1f1f1] pl-[2px] pr-[9px]">
              {n.eye !== "none" && (
                <button aria-label={`Toggle visibility of ${n.name}`} className="mr-2"><Eye off={n.eye === "off"} /></button>
              )}
              <span className="mr-[13px] text-[#9a9a9a]">
                {n.icon === "gear" ? <Gear /> : n.icon === "folder" ? <Folder /> : <SketchSmall />}
              </span>
              {n.name}
            </div>
          </li>
        ))}
      </ul>
    </section>
  );
}

/* ---------- navigation bar and timeline ---------- */

const Nav = ({ children }: { children: ReactNode }) => (
  <svg viewBox="0 0 16 16" className="size-4" fill="none" stroke="#56606a" aria-hidden="true">{children}</svg>
);

function NavigationBar() {
  return (
    <div role="toolbar" aria-label="Navigation" className="relative flex h-[22px] items-center bg-[#f1f1f1] px-[3px] text-[#3c3c3c]">
      <button aria-label="Orbit" className="flex items-center gap-1">
        <Nav><path d="M6.800 1h2.400v14H6.800z" fill="#e6eaee" /><path d="M12 5q6 2.500-1 4.500-4 .8-8 .2" stroke="#222" strokeWidth="1.400" /><path d="M0 9l4.500-2.500v5.500z" fill="#222" stroke="none" /></Nav>
        <Caret className="h-1 w-[5px]" />
      </button>
      <button aria-label="Look at" className="ml-[6px]">
        <Nav><path d="M1 6.500h14v8H1zM4 9h8v3.500H4z" strokeWidth="1.300" /><path d="M2 6l3-4v2h9l-1 2" /></Nav>
      </button>
      <button aria-label="Pan" className="ml-[9px]">
        <Nav><path d="M5 15q-1-3-4-6 1-2 3.500 1L3.500 4q1-1.500 2 0L6.500 8V2q1-1.500 2 0v6l1-5q1-1.500 2 0L11 8.500l1.500-3q1.500-1 1.500.5-1 6-3 9z" fill="#fafafa" /></Nav>
      </button>
      <button aria-label="Zoom" className="ml-[9px]">
        <Nav><circle cx="5.500" cy="7" r="4.500" fill="#dff0ee" strokeWidth="1.300" /><path d="M8.500 10.500l4 4" stroke="#333" strokeWidth="2.500" /><path d="M10.500 4h5M13 1.500v5M10.500 8h5" stroke="#333" /></Nav>
      </button>
      <button aria-label="Fit" className="ml-[9px] flex items-center gap-1">
        <Nav><circle cx="6.500" cy="6.500" r="5.500" fill="#f6f6f6" strokeWidth="1.300" /><path d="M4 4.500h5v4H4z" strokeWidth="1.300" /><path d="M10.500 10.500l4.500 4.500" stroke="#333" strokeWidth="2.500" /></Nav>
        <Caret className="h-1 w-[5px]" />
      </button>
      <button aria-label="Display settings" className="ml-[6px] flex items-center gap-[2px]">
        <Nav><rect x="1" y="1.500" width="14" height="10" fill="#dfe5ea" /><rect x="3" y="3.500" width="10" height="6" fill="#8db6e6" stroke="#3e6a9c" /><path d="M5 14.500h6" strokeWidth="2" /></Nav>
        <Caret className="h-1 w-[5px]" />
      </button>
      <button aria-label="Grid settings" className="ml-[6px] flex items-center gap-[2px]">
        <Nav><path d="M1.500 1.500h13v13h-13zM4.500 1v14M7.500 1v14M10.500 1v14M1 4.500h14M1 7.500h14M1 10.500h14" strokeWidth="0.900" /></Nav>
        <Caret className="h-1 w-[5px]" />
      </button>
      <button aria-label="Viewports" className="ml-[6px] flex items-center gap-[2px]">
        <Nav><path d="M1 2h6.500v5H1zM8.500 2H15v5H8.500zM1 8.500h6.500v5H1zM8.500 8.500H15v5H8.500z" fill="#a9c8f0" stroke="#3e5f8c" /></Nav>
        <Caret className="h-1 w-[5px]" />
      </button>
    </div>
  );
}

const PLAYBACK = [
  { name: "Go to start", d: "M2 1v12M12 1L3 7l9 6z" },
  { name: "Step back", d: "M10 2L1 7l9 5zM12 4v6" },
  { name: "Play", d: "M3 0.500l10 6.500L3 13.500z" },
  { name: "Step forward", d: "M4 2l9 5-9 5zM2 4v6" },
  { name: "Go to end", d: "M12 1v12M2 1l9 6-9 6z" },
];

function Timeline() {
  return (
    <footer className="flex h-[47px] shrink-0 items-center border-t-2 border-[#cdcdcd] bg-[#f1f1f1] pl-[8px] pr-[5px]">
      <div className="flex items-center gap-[10px]">
        {PLAYBACK.map((p) => (
          <button key={p.name} aria-label={p.name}>
            <svg viewBox="0 0 14 14" className="size-[14px]" fill="#4a4a4a" stroke="#4a4a4a" strokeWidth="1.200" aria-hidden="true"><path d={p.d} /></svg>
          </button>
        ))}
      </div>
      <div className="relative ml-[18px] flex h-full items-center gap-[7px] pb-[2px]">
        <button aria-label="Sketch1"><SketchSmall /></button>
        <button aria-label="Extrude1">
          <svg viewBox="0 0 16 16" className="size-4" aria-hidden="true">
            <path d="M1 13h9l3-3v2l-3 3.500H1z" fill="#a6a6a6" />
            <path d="M1 4l3-3h9l-3 3z" fill="#8ccbf7" /><path d="M1 4h9v9H1z" fill="#4fa0dc" /><path d="M10 4l3-3v9l-3 3z" fill="#3078b3" />
            <path d="M15 12V3" stroke="#333" /><path d="M13.500 4L15 1l1.500 3z" fill="#333" />
          </svg>
        </button>
        <button aria-label="Canvas1"><Picture className="size-4" /></button>
        <button aria-label="Sketch3"><SketchSmall /></button>
        <svg viewBox="0 0 70 7" className="absolute left-[7px] top-8 h-[7px] w-[70px]" fill="none" stroke="#bdbdbd" strokeWidth="2" aria-hidden="true">
          <path d="M1 0v6h67V0M23 0v6M45 0v6" />
        </svg>
        <svg viewBox="0 0 12 30" className="absolute -right-[9px] top-[8px] h-[30px] w-3" aria-hidden="true">
          <path d="M0 0h12v4L7 9v21H5V9L0 4z" fill="#5a5a5a" />
        </svg>
      </div>
      <button aria-label="Timeline settings" className="ml-auto text-[#606060]"><Gear className="size-[15px]" /></button>
    </footer>
  );
}

export default function App() {
  return (
    <div className="flex h-screen flex-col overflow-hidden bg-white font-['Liberation_Sans',Arial,sans-serif]">
      <TitleBar />
      <div className="flex min-h-0 flex-1">
        <DataPanel />
        <div className="flex min-w-0 flex-1 flex-col">
          <DocumentBar />
          <Ribbon />
          <main className="relative grid min-h-0 flex-1 grid-cols-[1fr_auto_1fr] grid-rows-[1fr_auto] pb-[3px] pl-[3px] pt-1">
            <Model />
            <ViewCube />
            <div className="col-span-3 flex"><Browser /></div>
            <div className="relative self-end"><PanelBar title="COMMENTS" plus /></div>
            <NavigationBar />
          </main>
          <Timeline />
        </div>
      </div>
      <div className="flex h-[6px] shrink-0 bg-[#d5d6da]" aria-hidden="true">
        <span className="w-[552px] bg-[#d3d4d7]" />
        <span className="w-[45px] bg-[#f6ad76]" />
        <span className="w-[140px] bg-[#d9d0d8]" />
        <span className="w-[45px] bg-[#f1ecef]" />
        <span className="flex-1 bg-[#e2d2dc]" />
      </div>
    </div>
  );
}
